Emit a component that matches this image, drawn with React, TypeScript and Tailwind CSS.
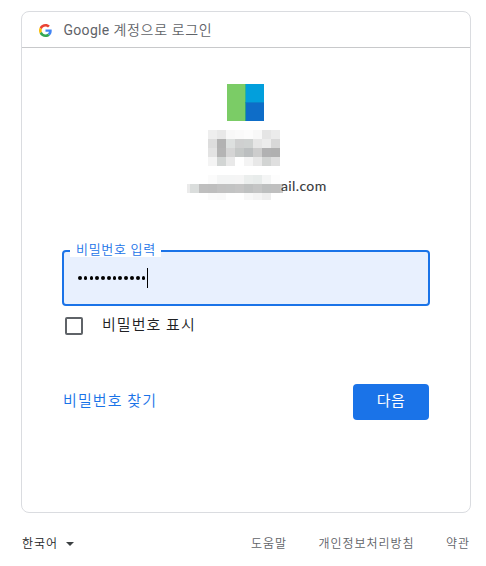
import { clsx } from "clsx";

const korean = "font-['Roboto','Noto_Sans_CJK_KR',sans-serif]";

// Pixelated blocks that hide the account name
const nameMosaic = [
  ["#eeeeee", "#e8e8e8", "#f8f8f8", "#fafafa", "#fcfcfc", "#f8f8f8", "#e5e5e5", "#ebebeb"],
  ["#dddddd", "#b2b2b2", "#dde0df", "#cfd0d0", "#cfd2d1", "#e6e6e6", "#ececec", "#d8d8d8"],
  ["#e3e3e3", "#b4b4b4", "#d5d5d5", "#c5c8c7", "#bcbfc0", "#cdcdcd", "#b1b1b2", "#b0b0b0"],
  ["#f4f4f4", "#d2d5d4", "#e9e9e9", "#ffffff", "#f4f4f4", "#e8e8e8", "#d2d4d3", "#dfdfdf"],
];

const emailMosaic = [
  ["#ffffff", "#ffffff", "#fbfbfb", "#f4f5f5", "#f4f5f5", "#f5f5f5", "#ebeeed", "#e8eceb", "#f4f5f5", "#fdfdfd"],
  ["#dadddc", "#bfbfbf", "#bebebe", "#c2c2c2", "#c2c3c3", "#c5c5c5", "#bfc1c1", "#c4c5c5", "#bdbfbf", "#bfbfbf"],
  ["#ffffff", "#ffffff", "#fbfbfb", "#fafafa", "#ffffff", "#ffffff", "#f8f8f8", "#f4f4f4", "#eeeeee", "#ffffff"],
];

const rowHeights = ["h-[9px]", "h-[9px]", "h-[7px]"];

function GoogleLogo() {
  return (
    <svg viewBox="0 0 48 48" className="size-[13px]">
      <path fill="#EA4335" d="M24 9.5c3.54 0 6.71 1.22 9.21 3.6l6.85-6.85C35.9 2.38 30.47 0 24 0 14.62 0 6.51 5.38 2.56 13.22l7.98 6.19C12.43 13.72 17.74 9.5 24 9.5z" />
      <path fill="#4285F4" d="M46.98 24.55c0-1.57-.15-3.09-.38-4.55H24v9.02h12.94c-.58 2.96-2.26 5.48-4.78 7.18l7.73 6c4.51-4.18 7.09-10.36 7.09-17.65z" />
      <path fill="#FBBC05" d="M10.53 28.59c-.48-1.45-.76-2.99-.76-4.59s.27-3.14.76-4.59l-7.98-6.19C.92 16.46 0 20.12 0 24c0 3.88.92 7.54 2.56 10.78l7.97-6.19z" />
      <path fill="#34A853" d="M24 48c6.48 0 11.93-2.13 15.89-5.81l-7.73-6c-2.15 1.45-4.92 2.3-8.16 2.3-6.26 0-11.57-4.22-13.47-9.91l-7.98 6.19C6.51 42.62 14.62 48 24 48z" />
    </svg>
  );
}

function Avatar() {
  return (
    <div className="grid size-[37px] grid-cols-[18px_19px] grid-rows-[18px_19px]">
      <div className="row-span-2 bg-[#7bcc66]" />
      <div className="border-l border-[#30b393] bg-[#029fdc]" />
      <div className="border-t border-l border-t-[#0a82cb] border-l-[#2b9f86] bg-[#0e6dc8]" />
    </div>
  );
}

function Account() {
  return (
    <div className="flex flex-col">
      <div className="ml-[205px] mt-9">
        <Avatar />
      </div>
      <div className="ml-[186px] mt-[9px] grid w-[72px] grid-cols-8">
        {nameMosaic.flat().map((color, i) => (
          <span key={i} className="h-[9px]" style={{ backgroundColor: color }} />
        ))}
      </div>
      <div className="ml-[165px] mt-[9px] flex h-[25px]">
        <span className="mt-[9px] h-[9px] w-[3px] bg-[#ebebeb]" />
        <div>
          {emailMosaic.map((row, r) => (
            <div key={r} className={clsx("flex", rowHeights[r])}>
              {row.map((color, i) => (
                <span key={i} className="w-[9px]" style={{ backgroundColor: color }} />
              ))}
            </div>
          ))}
        </div>
        <span className="mt-[9px] h-[9px] w-[3px] bg-[#c8c8c8]" />
        <span className="-ml-[2px] mt-px font-['Lato',sans-serif] text-[14px] leading-[20px] font-medium tracking-[0.35px] text-[#3c4043]">
          ail.com
        </span>
      </div>
    </div>
  );
}

function PasswordField() {
  return (
    <div className="relative ml-10 mt-[50px] flex h-14 w-[368px] items-center rounded border-2 border-[#1a73e8] bg-[#e8f0fe] pl-[14px]">
      <span className="absolute -top-[10px] left-[6px] flex h-[15px] w-[91px] items-center bg-white pl-[6px] text-[13px] font-[350] tracking-[0.7px] whitespace-nowrap text-[#1a73e8]">
        비밀번호 입력
      </span>
      <div className="flex gap-[2.1px]">
        {Array.from({ length: 12 }, (_, i) => (
          <span key={i} className="size-[3.7px] rounded-full bg-black" />
        ))}
      </div>
      <span className="ml-[1.6px] h-5 w-px bg-black" />
    </div>
  );
}

export default function App() {
  return (
    <main className={clsx("h-[566px] w-[486px] overflow-hidden bg-white pt-[11px] pl-[21px]", korean)}>
      <section className="h-[502px] w-[450px] rounded-lg border border-[#dadce0]">
        <header className="flex h-9 items-center border-b border-[#c8c9cb] pl-[16.5px] pt-[2px]">
          <GoogleLogo />
          <h1 className="ml-3 text-[14px] font-[350] tracking-[0.65px] text-[#5f6368]">
            <span className="font-normal tracking-[0.3px]">Google</span> 계정으로 로그인
          </h1>
        </header>
        <Account />
        <PasswordField />
        <label className="ml-[43px] mt-[10px] flex h-5 items-center">
          <span className="size-[18px] rounded-[2px] border-2 border-[#5f6368]" />
          <span className="-mt-px ml-[19px] text-[15px] font-[350] tracking-[1.05px] text-[#202124]">
            비밀번호 표시
          </span>
        </label>
        <div className="mr-[41px] ml-10 mt-[48px] flex h-9 items-center justify-between">
          <a className="-mt-[2px] ml-px text-[15px] font-[350] tracking-[1.1px] text-[#1a73e8]">비밀번호 찾기</a>
          <button className="h-9 w-[76px] rounded bg-[#1a73e8] pb-[2px] text-[15px] tracking-[0.5px] text-white">
            다음
          </button>
        </div>
      </section>
      <footer className="mt-[22px] flex h-[18px] w-[449px] items-center text-[12px] font-[350] tracking-[0.95px] text-[#5f6368]">
        <span className="ml-px text-[#202124]">한국어</span>
        <svg viewBox="0 0 8 4" className="ml-2 h-1 w-2">
          <path d="M0 0h8L4 4z" fill="#3c4043" />
        </svg>
        <nav className="ml-auto flex gap-[31.5px]">
          <a>도움말</a>
          <a>개인정보처리방침</a>
          <a>약관</a>
        </nav>
      </footer>
    </main>
  );
}
